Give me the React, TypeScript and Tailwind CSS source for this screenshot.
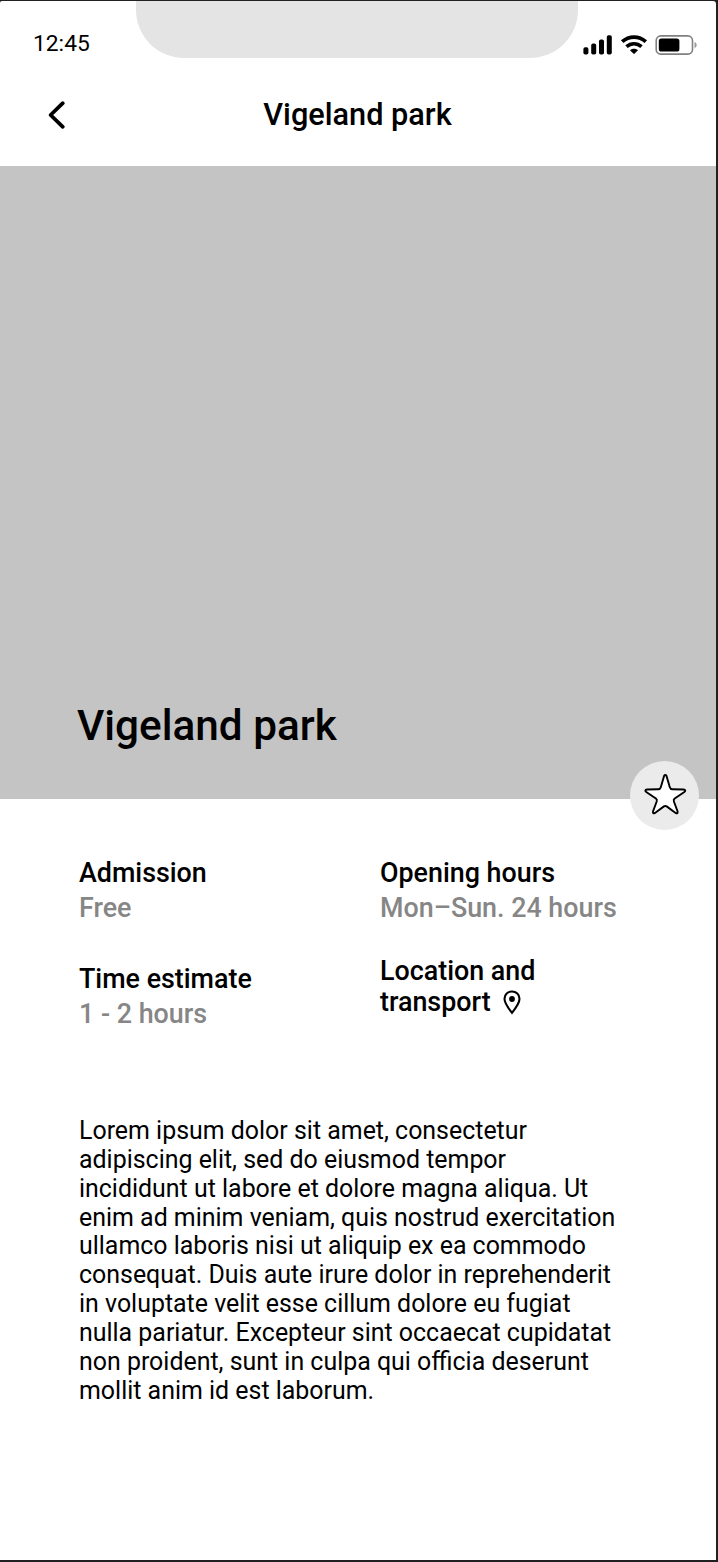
import React from 'react';

const description =
  'Lorem ipsum dolor sit amet, consectetur adipiscing elit, sed do eiusmod tempor incididunt ut labore et dolore magna aliqua. Ut enim ad minim veniam, quis nostrud exercitation ullamco laboris nisi ut aliquip ex ea commodo consequat. Duis aute irure dolor in reprehenderit in voluptate velit esse cillum dolore eu fugiat nulla pariatur. Excepteur sint occaecat cupidatat non proident, sunt in culpa qui officia deserunt mollit anim id est laborum.';

const StatusIcons: React.FC = () => (
  <svg width="114" height="20" viewBox="583 35 114 20" fill="none">
    {/* signal */}
    <g fill="#000">
      <rect x="583.4" y="47.2" width="5" height="7.3" rx="1.8" />
      <rect x="591.2" y="43.6" width="5" height="10.9" rx="1.8" />
      <rect x="599" y="39.4" width="5" height="15.1" rx="1.8" />
      <rect x="606.8" y="35.2" width="5" height="19.3" rx="1.8" />
    </g>
    {/* wifi */}
    <path d="M622.2 41.7C629 35.5 639 35.5 645.8 41.7" stroke="#000" strokeWidth="3.8" />
    <path d="M626.5 46.7C631 42.7 637 42.7 641.5 46.7" stroke="#000" strokeWidth="3.6" />
    <path d="M630 50.2C632.3 48.2 635.7 48.2 638 50.2L634.7 53.6Q634 54.3 633.3 53.6Z" fill="#000" />
    {/* battery */}
    <rect x="656.2" y="35.9" width="36.3" height="18.2" rx="4.6" stroke="#808080" strokeWidth="1.6" />
    <rect x="658.8" y="38.5" width="20.6" height="13" rx="2.6" fill="#000" />
    <path d="M694.5 42C697.4 43.2 697.4 47 694.5 48.2Z" fill="#999" />
  </svg>
);

const Header: React.FC = () => (
  <header className="flex h-[165px] flex-col">
    <div className="flex h-[57px] items-start">
      <span className="w-[136px] pt-[27px] pl-[33px] text-[22.8px] leading-[31px]">12:45</span>
      <div className="h-[57px] w-[442px] rounded-b-[48px] bg-[#e4e4e4]" />
      <div className="pt-[34px] pl-[5px]">
        <StatusIcons />
      </div>
    </div>
    <div className="grid h-[108px] grid-cols-[100px_1fr_100px] pt-[39px]">
      <button className="ml-[47px] flex h-9 w-5 items-center" aria-label="Back">
        <svg width="20" height="32" viewBox="47 99 20 32" fill="none">
          <path d="M62.8 103.2L50.6 115L62.8 126.8" stroke="#000" strokeWidth="3.8" strokeLinecap="round" strokeLinejoin="round" />
        </svg>
      </button>
      <h1 className="pr-px text-center text-[30.7px] leading-[35px] font-medium">Vigeland park</h1>
    </div>
  </header>
);

const Hero: React.FC = () => (
  <section className="relative flex h-[633px] items-end bg-[#c4c4c4] pb-[48px] pl-[77px]">
    <h2 className="text-[42.3px] leading-[51px] font-medium">Vigeland park</h2>
    <button
      className="absolute right-[17px] -bottom-[31px] flex size-[69px] items-center justify-center rounded-full bg-[#ebebeb]"
      aria-label="Save"
    >
      <svg width="45" height="45" viewBox="642 773 45 45">
        <path
          d="M664.1 775.9Q665.3 774.1 666.5 775.9L669.8 787.3Q670.4 789.3 672.5 789.3L683.5 789.5Q686.6 790.1 684.3 792L674.7 798.5Q673.2 799.6 673.9 801.5L677.6 811.4Q678 814.3 675.6 812.9L666.7 806.4Q665.3 805.5 663.9 806.4L655 812.9Q652.6 814.3 653 811.4L656.7 801.5Q657.4 799.6 655.9 798.5L646.3 792Q644 790.1 647.1 789.5L658.1 789.3Q660.2 789.3 660.8 787.3Z"
          fill="#fff"
          stroke="#000"
          strokeWidth="1.9"
        />
      </svg>
    </button>
  </section>
);

const InfoItem: React.FC<{ title: string; value: string }> = ({ title, value }) => (
  <div className="leading-[35px]">
    <h3>{title}</h3>
    <p className="text-[#868686]">{value}</p>
  </div>
);

const App: React.FC = () => {
  return (
    <div className="bg-[#202022] pt-px pr-[2px] pb-[2px] font-['Roboto',sans-serif] text-black">
      <main className="h-[1559px] overflow-hidden rounded-tl-[2px] rounded-tr-[3px] bg-white">
        <Header />
        <Hero />
        <section className="grid grid-cols-[301px_1fr] pt-[56.6px] pl-[79px] text-[26.85px] font-medium">
          <div className="flex flex-col gap-[36px]">
            <InfoItem title="Admission" value="Free" />
            <InfoItem title="Time estimate" value="1 - 2 hours" />
          </div>
          <div className="flex flex-col gap-[30px]">
            <InfoItem title="Opening hours" value="Mon–Sun. 24 hours" />
            <h3 className="leading-[31px]">
              Location and
              <span className="flex items-center">
                transport
                <svg className="ml-3" width="18" height="25" viewBox="0 0 18 25" fill="none">
                  <path d="M9 1.5C4.8 1.5 1.5 4.7 1.5 8.8C1.5 13.5 5.5 18.5 9 22.8C12.5 18.5 16.5 13.5 16.5 8.8C16.5 4.7 13.2 1.5 9 1.5Z" stroke="#000" strokeWidth="2.1" />
                  <circle cx="9" cy="9" r="2.9" fill="#000" />
                </svg>
              </span>
            </h3>
          </div>
        </section>
        <p className="mt-[85.4px] ml-[79px] w-[541px] text-[24.93px] leading-[28.85px]">{description}</p>
      </main>
    </div>
  );
};

export default App;
